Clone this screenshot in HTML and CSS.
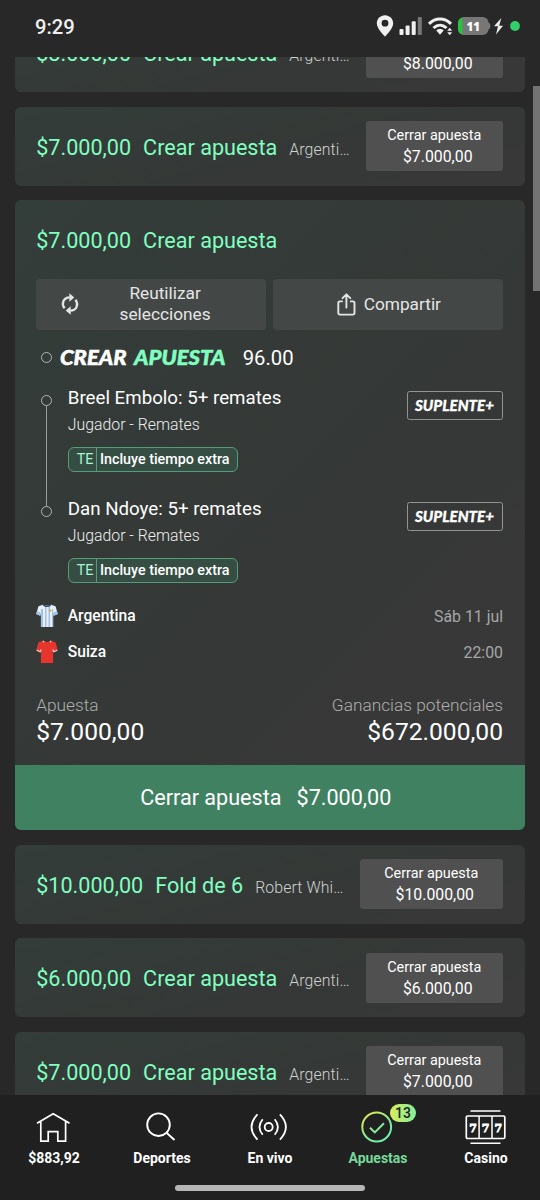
FILE: index.html
```html
<!DOCTYPE html>
<html lang="es">
<head>
<meta charset="utf-8">
<title>Apuestas</title>
<link rel="stylesheet" href="styles.css">
</head>
<body>
<div class="screen">
  <header class="status">
    <span class="clock">9:29</span>
    <svg class="status-icons" width="146" height="26" viewBox="376 14 146 26">
      <path fill="#f0f0f0" fill-rule="evenodd" d="M385 15.3c-4.7 0-8.2 3.6-8.2 8.1 0 5.400 8.200 13 8.200 13s8.200-7.600 8.200-13c0-4.500-3.500-8.100-8.200-8.100zm0 4.500a3.400 3.400 0 1 1 0 6.800 3.400 3.400 0 0 1 0-6.800z"/>
      <g fill="#f0f0f0"><rect x="399.500" y="29" width="4" height="6" rx="1"/><rect x="405.600" y="25.500" width="4" height="9.500" rx="1"/><rect x="411.700" y="21.300" width="4" height="13.700" rx="1"/><rect x="417.800" y="17" width="4" height="18" rx="1" fill="#777"/></g>
      <g fill="none" stroke="#f0f0f0" stroke-width="3"><path d="M429 23.800c6.500-6.300 15.500-6.300 22 0"/><path d="M433.500 28c4-3.800 9-3.800 13 0"/></g>
      <path fill="#f0f0f0" d="M436.300 30.500c2.200-1.900 5.200-1.900 7.400 0l-3.700 4.300zM447.200 30.800l2.500-3 2.500 3zM447.200 32.200l2.500 3 2.500-3z"/>
      <path fill="#777" d="M465 17h16c4.500 0 7 1.500 7.500 5.500 2.600 1 2.600 6 0 7-.5 4-3 5.500-7.500 5.500h-16c-4.500 0-7-2.500-7-6.500v-5c0-4 2.500-6.500 7-6.500z"/>
      <path fill="#25c63c" d="M462.300 17.400c-2.800.9-4.300 3.100-4.300 6.100v5c0 3 1.500 5.200 4.300 6.100z"/>
      <text class="battery" x="473.300" y="30.500" text-anchor="middle">11</text>
      <path fill="#eee" d="M501.300 18l-7.300 8.300h4l-2 8.200 7-8.700h-3.800z"/>
      <circle cx="515" cy="26" r="4.900" fill="#31d06a"/>
    </svg>
  </header>

  <main class="feed">
    <article class="card row clipped">
      <span class="stake">$8.000,00</span><span class="kind">Crear apuesta</span><span class="event">Argenti…</span>
      <button class="cashout"><span>Cerrar apuesta</span><span class="amount">$8.000,00</span></button>
    </article>
    <article class="card row">
      <span class="stake">$7.000,00</span><span class="kind">Crear apuesta</span><span class="event">Argenti…</span>
      <button class="cashout"><span>Cerrar apuesta</span><span class="amount">$7.000,00</span></button>
    </article>

    <article class="card open">
      <div class="open-head"><span class="stake">$7.000,00</span><span class="kind">Crear apuesta</span></div>
      <div class="actions">
        <button class="action reuse">
          <svg width="18" height="22" viewBox="0 0 18 22"><g fill="none" stroke="#e4e6e5" stroke-width="2.300"><path d="M3.600 15.300C.2 11.200 1.800 4.500 8.800 4.300"/><path d="M14.400 6.700c3.400 4.100 1.800 10.800-5.200 11"/></g><path fill="#e4e6e5" d="M8.300.2l5 4.300-5 4.300zM9.700 13.200l-5 4.300 5 4.300z"/></svg>
          <span class="action-label">Reutilizar<br>selecciones</span>
        </button>
        <button class="action share">
          <svg width="19" height="23" viewBox="0 0 19 23" fill="none" stroke="#e4e6e5" stroke-width="1.900" stroke-linecap="round" stroke-linejoin="round"><path d="M5 8.400H3Q1.300 8.400 1.300 10v9.800q0 1.800 1.700 1.800h12.800q1.700 0 1.700-1.800V10q0-1.600-1.700-1.600h-2M9.400 14.500V1.600M5.500 5.200l3.900-3.900 3.900 3.900"/></svg>
          <span>Compartir</span>
        </button>
      </div>
      <div class="builder">
        <i class="dot"></i>
        <svg class="builder-logo" width="168" height="20" viewBox="0 0 168 20"><text class="brand" x="0" y="17" textLength="66.500" lengthAdjust="spacingAndGlyphs">CREAR</text><text class="brand mint" x="74" y="17" textLength="91.500" lengthAdjust="spacingAndGlyphs">APUESTA</text></svg>
        <span class="odds">96.00</span>
      </div>
      <div class="legs">
        <section class="leg">
          <div class="rail"><i class="dot"></i><i class="line"></i></div>
          <div class="leg-body">
            <div class="pick">Breel Embolo: 5+ remates</div>
            <div class="market">Jugador - Remates</div>
            <div class="extra"><b>TE</b><span>Incluye tiempo extra</span></div>
          </div>
          <div class="sub"><svg width="80" height="15" viewBox="0 0 80 15"><text class="sub-text" x="0" y="12.500" textLength="79" lengthAdjust="spacingAndGlyphs">SUPLENTE+</text></svg></div>
        </section>
        <section class="leg last">
          <div class="rail"><i class="dot"></i></div>
          <div class="leg-body">
            <div class="pick">Dan Ndoye: 5+ remates</div>
            <div class="market">Jugador - Remates</div>
            <div class="extra"><b>TE</b><span>Incluye tiempo extra</span></div>
          </div>
          <div class="sub"><svg width="80" height="15" viewBox="0 0 80 15"><text class="sub-text" x="0" y="12.500" textLength="79" lengthAdjust="spacingAndGlyphs">SUPLENTE+</text></svg></div>
        </section>
      </div>
      <div class="team">
        <svg width="22" height="24" viewBox="0 0 22 24"><path fill="#e9eff6" d="M7 .8q4 1.600 8 0l4.500 1.500 2.300 7.700-4 1.700-.7-1.700v13H4.900V10l-.7 1.700-4-1.700 2.300-7.700z"/><path fill="#9fc0e8" d="M5 5h2v18H5zM9 2h1.500v21H9zM12.500 2H14v21h-1.500zM16 5h1.200v18H16zM1 7l4 2-.8 2.700-4-1.700zM21 7l-4 2 .8 2.700 4-1.700z"/><path fill="none" stroke="#364a64" stroke-width="1.400" d="M7.300 1.200q3.700 2.200 7.400 0"/><circle cx="14" cy="6.500" r="1.300" fill="#d7ae51"/></svg>
        <span>Argentina</span><time>Sáb 11 jul</time>
      </div>
      <div class="team">
        <svg width="22" height="24" viewBox="0 0 22 24"><path fill="#e5352c" d="M7 .8q4 2.200 8 0l4.500 1.500 2.300 7.700-4 1.700-.7-1.700v13H4.900V10l-.7 1.700-4-1.700 2.300-7.700z"/><path fill="none" stroke="#f3dedb" stroke-width="1.100" d="M7 .8l1 1.500M15 .8l-1 1.500M.7 10.200l3.500 1.500 1-2.200M21.300 10.200l-3.500 1.500-1-2.200"/></svg>
        <span>Suiza</span><time>22:00</time>
      </div>
      <div class="totals">
        <div><div class="label">Apuesta</div><div class="value">$7.000,00</div></div>
        <div class="right"><div class="label">Ganancias potenciales</div><div class="value">$672.000,00</div></div>
      </div>
      <button class="close-bet"><span>Cerrar apuesta</span><span>$7.000,00</span></button>
    </article>

    <article class="card row">
      <span class="stake">$10.000,00</span><span class="kind">Fold de 6</span><span class="event">Robert Whi…</span>
      <button class="cashout wide"><span>Cerrar apuesta</span><span class="amount">$10.000,00</span></button>
    </article>
    <article class="card row">
      <span class="stake">$6.000,00</span><span class="kind">Crear apuesta</span><span class="event">Argenti…</span>
      <button class="cashout"><span>Cerrar apuesta</span><span class="amount">$6.000,00</span></button>
    </article>
    <article class="card row">
      <span class="stake">$7.000,00</span><span class="kind">Crear apuesta</span><span class="event">Argenti…</span>
      <button class="cashout"><span>Cerrar apuesta</span><span class="amount">$7.000,00</span></button>
    </article>
    <i class="scrollbar"></i>
  </main>

  <footer class="bottom">
    <nav class="tabs">
      <a class="tab"><svg width="44" height="40" viewBox="0 0 44 40" fill="none" stroke="#fff" stroke-width="1.700"><path d="M5 16.300L21.200 6.700l16.300 9.600M8.800 14.500v19.700h7.400V24.600h9.600v9.600h7.800V14.500" /></svg><span>$883,92</span></a>
      <a class="tab"><svg width="44" height="40" viewBox="0 0 44 40" fill="none" stroke="#fff" stroke-width="1.900"><circle cx="18.500" cy="17.700" r="11.300"/><path d="M26.500 25.700l8 7.300"/></svg><span>Deportes</span></a>
      <a class="tab"><svg width="44" height="40" viewBox="0 0 44 40" fill="none" stroke="#fff" stroke-width="1.800"><circle cx="20.700" cy="20" r="4"/><path d="M14.700 12.200q-6.400 7.800 0 15.600M26.700 12.200q6.400 7.800 0 15.600M9.500 7.400q-12 12.600 0 25.200M31.900 7.400q12 12.600 0 25.200"/></svg><span>En vivo</span></a>
      <a class="tab active"><svg width="44" height="40" viewBox="0 0 44 40" fill="none" stroke="url(#lime)" stroke-width="2"><defs><linearGradient id="lime" gradientUnits="userSpaceOnUse" x1="8" y1="6" x2="30" y2="34"><stop offset="0" stop-color="#e8e84e"/><stop offset=".6" stop-color="#7fed98"/><stop offset="1" stop-color="#6df0ad"/></linearGradient></defs><circle cx="20.700" cy="20" r="14.400"/><path d="M14 20.800l4.800 4.600 9.200-9.200"/></svg><span>Apuestas</span><em class="badge">13</em></a>
      <a class="tab"><svg width="44" height="40" viewBox="0 0 44 40" fill="none" stroke="#fff" stroke-width="1.500"><path d="M6.500 4h30M6.500 36.300h30"/><rect x="2.300" y="9" width="38.500" height="22.500" rx="1.200" stroke-width="1.700"/><path d="M15.100 9v22.500M28 9v22.500"/><g class="reels"><text x="9" y="24.500">7</text><text x="21.600" y="24.500">7</text><text x="34.300" y="24.500">7</text></g></svg><span>Casino</span></a>
    </nav>
    <i class="home-bar"></i>
  </footer>
</div>
</body>
</html>
```

FILE: styles.css
```css
* { box-sizing: border-box; }
body { margin: 0; background: #282828; font-family: Roboto, sans-serif; color: #fff; }
button { border: 0; padding: 0; color: inherit; font: inherit; }
svg { display: block; flex: none; overflow: visible; }
.screen { width: 540px; height: 1200px; display: flex; flex-direction: column; overflow: hidden; }

.status { height: 57px; flex: none; display: flex; justify-content: space-between; align-items: flex-start; padding: 14px 18px 0 35px; }
.clock { font-size: 20.200px; font-weight: 500; line-height: 26px; color: #f0f0f0; }
.battery { font: 900 11.500px "Noto Sans", sans-serif; fill: #fff; }

.feed { flex: 1; min-height: 0; overflow: hidden; position: relative; display: flex; flex-direction: column; gap: 14.400px; padding: 0 15px 0 14.600px; }
.card { flex: none; border-radius: 6px; background: linear-gradient(165deg, #333d39 0%, #353836 60%, #383838 100%); overflow: hidden; }
.clipped { margin-top: -43.900px; }
.row { height: 79.200px; display: flex; align-items: center; padding: 0 22px 0 21.600px; }
.stake, .kind { font-size: 21.600px; line-height: 26px; color: #80ffc0; white-space: nowrap; }
.row .stake, .row .kind { padding-top: 3px; }
.kind { margin-left: 12px; }
.event { margin-left: 12px; padding-top: 7px; font-size: 15.840px; line-height: 22px; font-weight: 300; color: #d0d2d1; white-space: nowrap; letter-spacing: .1px; }
.cashout { margin-left: auto; width: 137.500px; height: 50.400px; border-radius: 3px; background: #505050; display: flex; flex-direction: column; justify-content: center; align-items: center; font-size: 14.400px; line-height: 21.200px; }
.cashout.wide { width: 143.500px; }
.amount { padding-left: 7px; font-size: 15.840px; }

.open { height: 630px; display: flex; flex-direction: column; background: linear-gradient(135deg, #333d39 0%, #353836 55%, #383838 85%); }
.open > div { margin-left: 21.600px; margin-right: 22px; }
.open-head { height: 79px; padding-top: 27.500px; display: flex; }
.actions { display: grid; grid-template-columns: 1fr 1fr; gap: 7.200px; }
.action { height: 50.400px; border-radius: 4px; background: #434846; display: flex; align-items: center; justify-content: center; gap: 8px; font-size: 17.280px; line-height: 21.600px; color: #e4e6e5; }
.share { padding-left: 1.500px; }
.reuse { justify-content: flex-start; padding-left: 25px; gap: 0; }
.action-label { flex: 1; text-align: center; padding-left: 6px; padding-right: 21px; }
.builder { height: 56px; display: flex; align-items: center; padding-left: 5px; }
.dot { display: block; flex: none; width: 11px; height: 11px; border: 1.500px solid #b3b5b4; border-radius: 50%; }
.builder-logo { margin-left: 8px; }
.brand { font: italic 900 20px Lato, sans-serif; fill: #fff; stroke: #fff; stroke-width: .5px; }
.mint { fill: #80ffc0; stroke: #80ffc0; }
.odds { margin-left: 14.500px; font-size: 20.300px; }
.legs { display: flex; flex-direction: column; }
.leg { height: 111px; display: flex; align-items: flex-start; }
.leg.last { height: 101.500px; }
.rail { width: 31.600px; align-self: stretch; padding: 9px 0 0 5px; display: flex; flex-direction: column; }
.line { flex: 1; width: 1.500px; margin: 0 0 -9px 4.800px; background: #9b9d9c; }
.leg-body { flex: 1; }
.pick { font-size: 18.720px; line-height: 24px; }
.market { margin-top: 4.500px; font-size: 15.840px; line-height: 22px; font-weight: 300; color: #eee; }
.extra { display: inline-flex; margin-top: 10.500px; height: 25px; border: 1.500px solid #559c7b; border-radius: 6px; background: #364d43; font-size: 14.400px; line-height: 23px; overflow: hidden; }
.extra b { width: 28.500px; padding-left: 8px; font-weight: 400; color: #a4f5d0; border-right: 1.500px solid #559c7b; }
.extra span { padding: 0 7.500px 0 2.700px; font-size: 14.300px; font-weight: 500; white-space: nowrap; }
.sub { margin-top: 5px; width: 96.500px; height: 29px; border: 1.400px solid #929493; border-radius: 2.500px; display: flex; align-items: center; justify-content: center; }
.sub-text { font: italic 900 15.500px Lato, sans-serif; fill: #fff; stroke: #fff; stroke-width: .3px; }
.team { height: 36px; display: flex; align-items: center; font-size: 15.600px; font-weight: 500; }
.team svg { width: 22px; margin-right: 9.600px; }
.team time { margin-left: auto; color: #a5a7a6; font-weight: 400; font-size: 15.840px; }
.totals { flex: 1; padding-top: 23.500px; display: flex; justify-content: space-between; }
.right { text-align: right; }
.label { font-size: 17.280px; line-height: 22px; font-weight: 300; color: #adafae; }
.value { font-size: 24.600px; line-height: 31px; }
.close-bet { height: 64.800px; flex: none; background: #3f8161; display: flex; justify-content: center; align-items: center; gap: 15px; padding-right: 8px; font-size: 21.600px; }
.scrollbar { position: absolute; right: 0; top: 29px; width: 7px; height: 205px; background: #737373; }

.bottom { height: 105px; flex: none; background: #202020; display: flex; flex-direction: column; align-items: center; }
.tabs { width: 540px; display: grid; grid-template-columns: repeat(5, 1fr); padding-top: 12px; height: 90px; }
.tab { position: relative; display: flex; flex-direction: column; align-items: center; font-size: 14px; line-height: 20px; font-weight: 700; }
.tab > span { margin-top: 1px; }
.active { color: #77d99b; }
.badge { position: absolute; left: 66px; top: -3px; width: 26px; height: 18px; border-radius: 9px; background: linear-gradient(90deg, #d7ee5c, #83ee97); color: #202020; font-style: normal; font-weight: 500; font-size: 14px; line-height: 18px; text-align: center; }
.reels { font: 700 11px "DejaVu Serif", serif; fill: #fff; stroke: #fff; stroke-width: .8px; text-anchor: middle; }
.home-bar { width: 190px; height: 6px; border-radius: 3px; background: #b6b6b6; }
```
